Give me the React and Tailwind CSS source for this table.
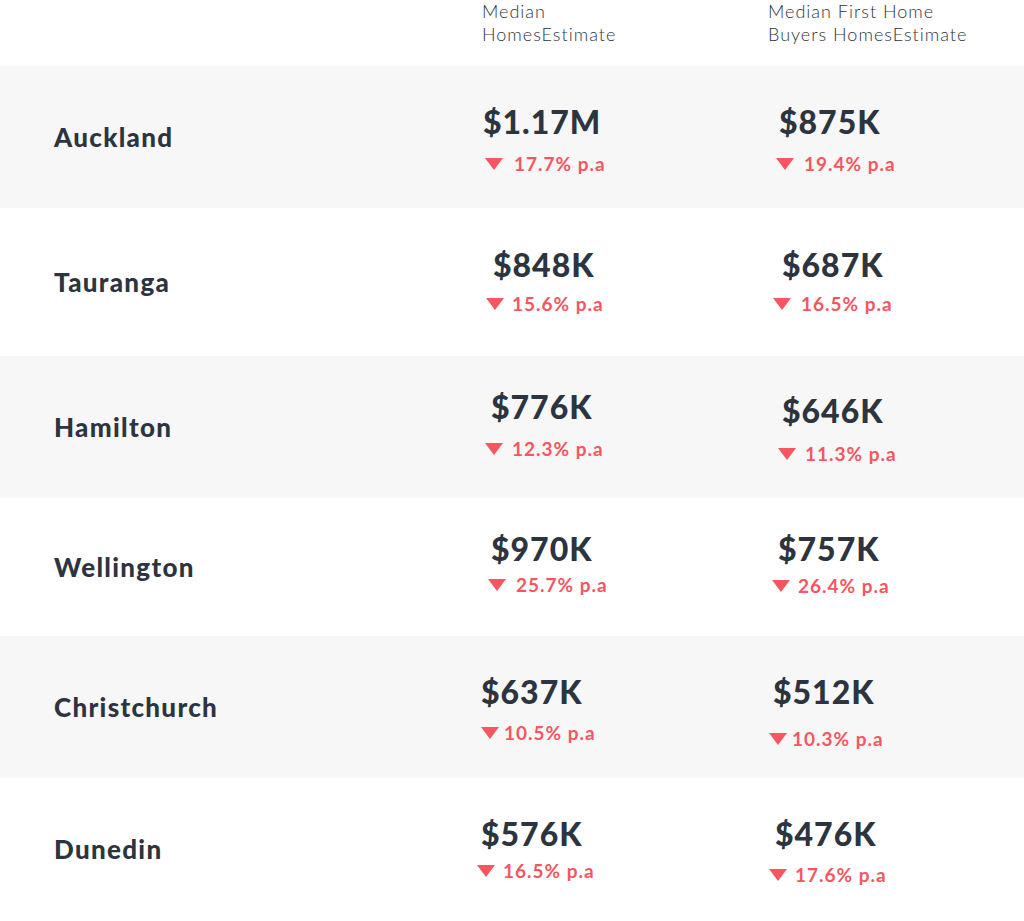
const rows = [
  {
    city: "Auckland",
    h: "h-[142px]",
    bg: "bg-[#f7f7f7]",
    a: { price: "$1.17M", pct: "17.7% p.a", pt: "pt-[36px]", pl: "pl-[2px]", cl: "pl-[4px]", mt: "mt-[10px]", gap: "gap-[11px]" },
    b: { price: "$875K", pct: "19.4% p.a", pt: "pt-[36px]", pl: "pl-[10px]", cl: "pl-[7px]", mt: "mt-[10px]", gap: "gap-[10px]" },
  },
  {
    city: "Tauranga",
    h: "h-[148px]",
    bg: "bg-white",
    a: { price: "$848K", pct: "15.6% p.a", pt: "pt-[37px]", pl: "pl-[12px]", cl: "pl-[5px]", mt: "mt-[7px]", gap: "gap-[8px]" },
    b: { price: "$687K", pct: "16.5% p.a", pt: "pt-[37px]", pl: "pl-[13px]", cl: "pl-[4px]", mt: "mt-[7px]", gap: "gap-[10px]" },
  },
  {
    city: "Hamilton",
    h: "h-[142px]",
    bg: "bg-[#f7f7f7]",
    a: { price: "$776K", pct: "12.3% p.a", pt: "pt-[31px]", pl: "pl-[10px]", cl: "pl-[4px]", mt: "mt-[10px]", gap: "gap-[9px]" },
    b: { price: "$646K", pct: "11.3% p.a", pt: "pt-[35px]", pl: "pl-[13px]", cl: "pl-[9px]", mt: "mt-[11px]", gap: "gap-[9px]" },
  },
  {
    city: "Wellington",
    h: "h-[138px]",
    bg: "bg-white",
    a: { price: "$970K", pct: "25.7% p.a", pt: "pt-[31px]", pl: "pl-[10px]", cl: "pl-[7px]", mt: "mt-[4px]", gap: "gap-[10px]" },
    b: { price: "$757K", pct: "26.4% p.a", pt: "pt-[31px]", pl: "pl-[9px]", cl: "pl-[3px]", mt: "mt-[5px]", gap: "gap-[8px]" },
  },
  {
    city: "Christchurch",
    h: "h-[142px]",
    bg: "bg-[#f7f7f7]",
    a: { price: "$637K", pct: "10.5% p.a", pt: "pt-[36px]", pl: "pl-[0px]", cl: "pl-[0px]", mt: "mt-[9px]", gap: "gap-[5px]" },
    b: { price: "$512K", pct: "10.3% p.a", pt: "pt-[36px]", pl: "pl-[4px]", cl: "pl-[0px]", mt: "mt-[15px]", gap: "gap-[5px]" },
  },
  {
    city: "Dunedin",
    h: "h-[143px]",
    bg: "bg-white",
    a: { price: "$576K", pct: "16.5% p.a", pt: "pt-[36px]", pl: "pl-[0px]", cl: "-ml-[4px]", mt: "mt-[5px]", gap: "gap-[8px]" },
    b: { price: "$476K", pct: "17.6% p.a", pt: "pt-[36px]", pl: "pl-[6px]", cl: "pl-[0px]", mt: "mt-[9px]", gap: "gap-[8px]" },
  },
];

function DownTriangle() {
  return (
    <svg width="18" height="12" viewBox="0 0 18 12" className="shrink-0">
      <path d="M0 0 H18 L9 12 Z" fill="#f5565f" />
    </svg>
  );
}

function ValueCell({ v }) {
  return (
    <div className={`flex flex-col ${v.pt}`}>
      <div className={`${v.pl} text-[32px] leading-[40px] font-black text-[#2c3440] tracking-[1px]`}>
        {v.price}
      </div>
      <div className={`flex items-center ${v.cl} ${v.mt} ${v.gap} h-[24px]`}>
        <DownTriangle />
        <span className="text-[19px] leading-[24px] font-bold text-[#f5565f] tracking-[1px]">
          {v.pct}
        </span>
      </div>
    </div>
  );
}

export default function App() {
  return (
    <div className="w-[1024px] h-[921px] overflow-hidden bg-white font-['Lato',sans-serif] text-[#2c3440]">
      {/* header */}
      <div className="flex h-[66px]">
        <div className="w-[481px] shrink-0" />
        <div className="w-[287px] shrink-0 pl-[1px] text-[18px] leading-[23px] font-light tracking-[1px]">
          Median
          <br />
          HomesEstimate
        </div>
        <div className="flex-1 text-[18px] leading-[23px] font-light tracking-[1px]">
          Median First Home
          <br />
          Buyers HomesEstimate
        </div>
      </div>

      {rows.map((r) => (
        <div key={r.city} className={`flex ${r.h} ${r.bg}`}>
          <div className="w-[481px] shrink-0 flex items-center pl-[54px] text-[26px] font-black tracking-[1.3px]">
            {r.city}
          </div>
          <div className="w-[288px] shrink-0">
            <ValueCell v={r.a} />
          </div>
          <div className="flex-1">
            <ValueCell v={r.b} />
          </div>
        </div>
      ))}
    </div>
  );
}
